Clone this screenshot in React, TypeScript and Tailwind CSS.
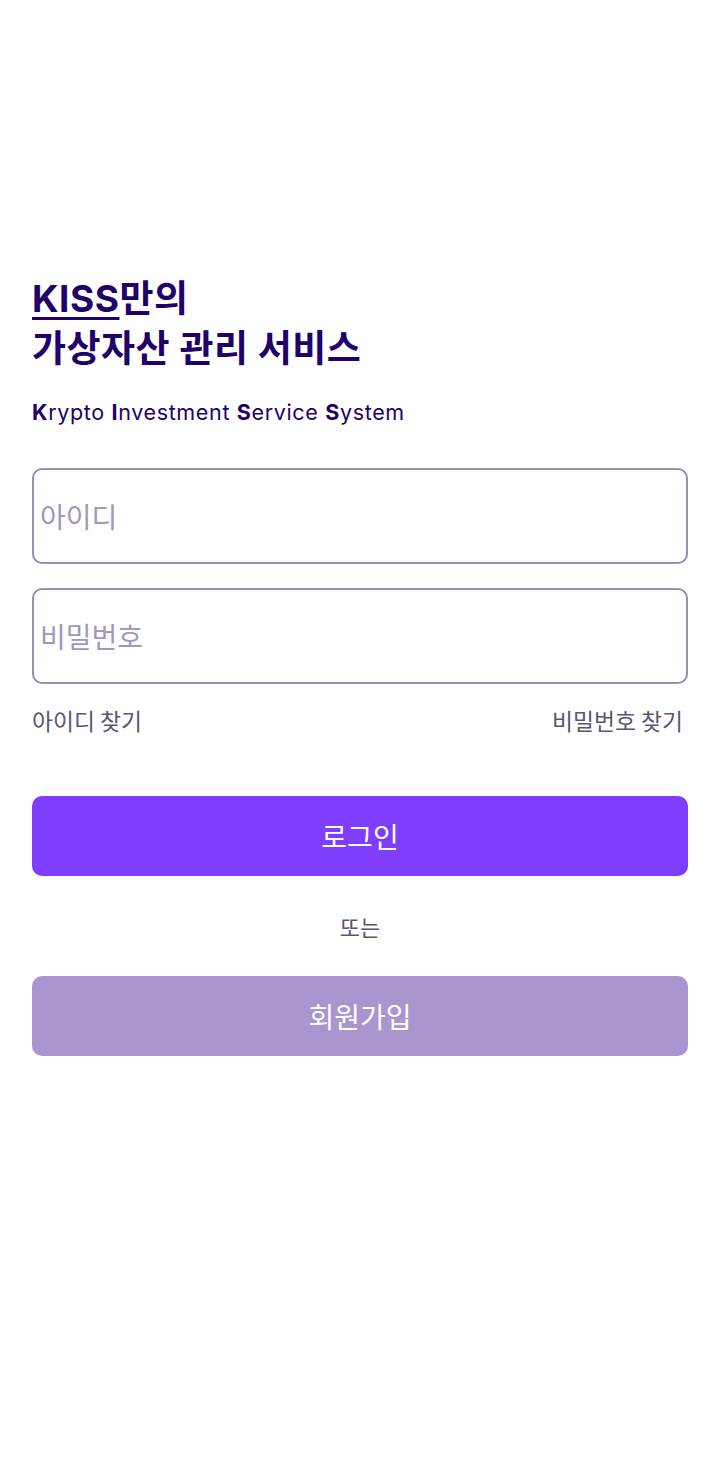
import React from "react";

const font = { fontFamily: "Inter, 'Noto Sans CJK KR', sans-serif" };
const kr = { fontFamily: "'Noto Sans CJK KR', Inter, sans-serif" };

function Field({ label, type }: { label: string; type: string }) {
  return (
    <input
      type={type}
      aria-label={label}
      placeholder={label}
      style={kr}
      className="h-[96px] w-full rounded-[10px] border-2 border-[#9a8fb3] bg-white px-[6px] text-[28px] text-[#22006a] outline-none placeholder:text-[#a296ba]"
    />
  );
}

export default function App() {
  return (
    <div className="min-h-[1480px] w-full bg-white" style={font}>
      <div className="px-8 pt-[274px]">
        <h1 className="text-[37px] font-bold leading-[50px] tracking-[0.5px] text-[#22006a]">
          <span className="underline decoration-[3px] underline-offset-[5px]">KISS</span>만의
          <br />
          가상자산 관리 서비스
        </h1>
        <p className="mt-[24px] text-[21.5px] leading-[28px] tracking-[0.65px] text-[#22006a]">
          <b>K</b>rypto <b>I</b>nvestment <b>S</b>ervice <b>S</b>ystem
        </p>
        <form className="mt-[42px] flex flex-col gap-6" onSubmit={(e) => e.preventDefault()}>
          <Field label="아이디" type="text" />
          <Field label="비밀번호" type="password" />
        </form>
        <div
          className="mt-[20px] flex items-center justify-between text-[22.8px] leading-[34px] text-[#5c5470]"
          style={kr}
        >
          <a href="#">아이디 찾기</a>
          <a href="#" className="pr-[5px]">비밀번호 찾기</a>
        </div>
        <button
          style={kr}
          className="mt-[58px] flex h-[80px] w-full items-center justify-center rounded-[10px] bg-[#7f3dff] text-[28px] text-white"
        >
          로그인
        </button>
        <div
          style={kr}
          className="flex h-[100px] items-center justify-center text-[22px] text-[#5c5470]"
        >
          또는
        </div>
        <button
          style={kr}
          className="flex h-[80px] w-full items-center justify-center rounded-[10px] bg-[#a996cf] text-[28px] text-white"
        >
          회원가입
        </button>
      </div>
    </div>
  );
}
